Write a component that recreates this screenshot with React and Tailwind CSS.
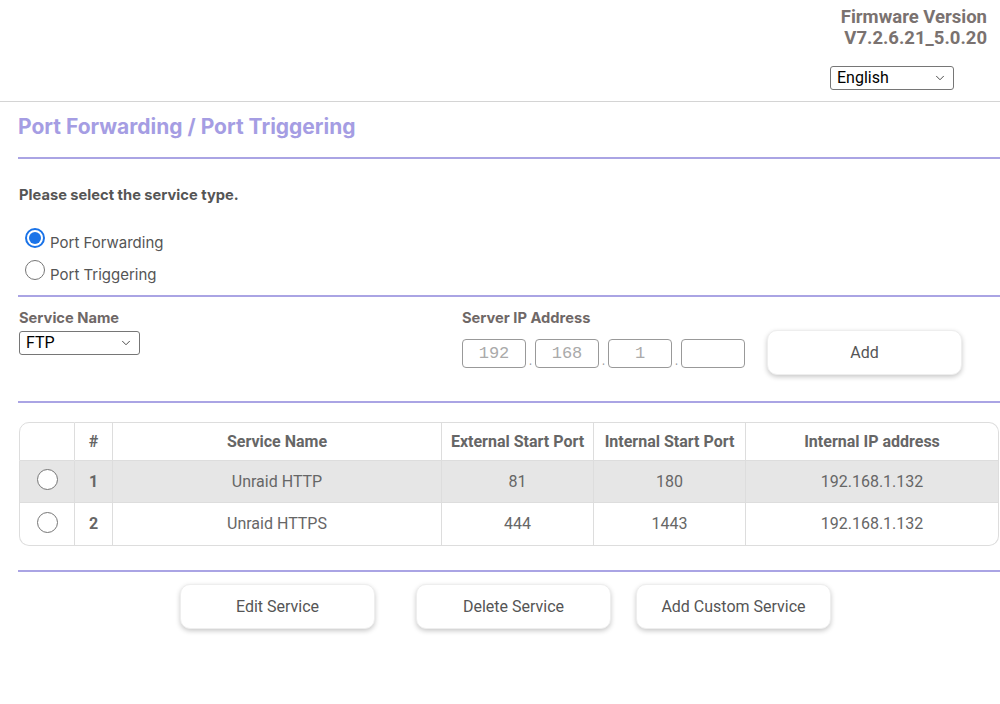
import { ChevronDown } from 'lucide-react'

const rows = [
  { id: 1, name: 'Unraid HTTP', ext: '81', int: '180', ip: '192.168.1.132' },
  { id: 2, name: 'Unraid HTTPS', ext: '444', int: '1443', ip: '192.168.1.132' },
]

function Select({ value, className }) {
  return (
    <div className={`flex items-center justify-between border border-[#767676] rounded-[3px] bg-white text-black px-1.5 ${className}`}>
      <span>{value}</span>
      <ChevronDown className="w-3.5 h-3.5 text-[#333]" strokeWidth={1.5} />
    </div>
  )
}

function Radio({ checked }) {
  return checked ? (
    <span className="w-5 h-5 shrink-0 rounded-full border-2 border-[#1a73e8] flex items-center justify-center bg-white">
      <span className="w-3 h-3 rounded-full bg-[#1a73e8]" />
    </span>
  ) : (
    <span className="w-5 h-5 shrink-0 rounded-full border border-[#767676] bg-white" />
  )
}

function Button({ children, className }) {
  return (
    <button className={`h-[45px] rounded-[10px] bg-white border border-[#eee] shadow-[0_2px_5px_rgba(0,0,0,0.22)] text-[16px] text-[#555] font-['Roboto',sans-serif] ${className}`}>
      {children}
    </button>
  )
}

export default function App() {
  return (
    <div className="w-[1000px] h-[704px] bg-white font-['Inter',sans-serif] text-[#555] overflow-hidden">
      {/* header */}
      <div className="h-[102px] border-b border-[#d4d4d4] flex flex-col items-end pr-[13px] pt-[7px]">
        <div className="text-right text-[18.5px] font-bold leading-[21px] text-[#7a7270] font-['Roboto',sans-serif]">
          <p>Firmware Version</p>
          <p>V7.2.6.21_5.0.20</p>
        </div>
        <Select value="English" className="mt-[17px] mr-[33px] w-[124px] h-[24px] text-[16px] font-['Roboto',sans-serif]" />
      </div>

      <div className="pl-[18px]">
        <h1 className="text-[21px] font-bold text-[#a59de3] pt-[12px] leading-[26px]">Port Forwarding / Port Triggering</h1>
        <div className="h-[2px] bg-[#aaa4e4] mt-[17px]" />

        <p className="mt-[25px] text-[14.7px] leading-[22px] font-bold text-[#555] pl-[1px]">Please select the service type.</p>
        <div className="mt-[22px] pl-[7px] flex flex-col gap-[12px] text-[15px] text-[#555]">
          <label className="flex items-start gap-[5px] h-[20px]">
            <Radio checked />
            <span className="mt-[5px] leading-[20px]">Port Forwarding</span>
          </label>
          <label className="flex items-start gap-[5px] h-[20px]">
            <Radio />
            <span className="mt-[5px] leading-[20px]">Port Triggering</span>
          </label>
        </div>
        <div className="h-[2px] bg-[#aaa4e4] mt-[15px]" />

        <div className="flex pl-[1px] pt-[11px] h-[104px]">
          <div className="w-[443px]">
            <p className="text-[14.7px] leading-[20px] font-bold text-[#6f6867]">Service Name</p>
            <Select value="FTP" className="mt-[3px] w-[121px] h-[24px] text-[16px] font-['Roboto',sans-serif]" />
          </div>
          <div>
            <p className="text-[14.7px] leading-[20px] font-bold text-[#6f6867]">Server IP Address</p>
            <div className="flex items-start">
              <div className="flex items-end mt-[11px] font-['Liberation_Mono',monospace] text-[17px] text-[#aaa]">
                {['192', '168', '1', ''].map((v, i) => (
                  <div key={i} className="flex items-end">
                    <div className="w-[64px] h-[29px] border border-[#999] rounded-[4px] flex items-center justify-center">{v}</div>
                    {i < 3 && <span className="w-[9px] text-center text-[10px] leading-[10px] text-[#999]">.</span>}
                  </div>
                ))}
              </div>
              <Button className="ml-[22px] mt-[2px] w-[195px]">Add</Button>
            </div>
          </div>
        </div>
        <div className="h-[2px] bg-[#aaa4e4]" />

        <div className="mt-[19px] mr-px pl-px font-['Roboto',sans-serif]">
          <table className="w-full border-separate border-spacing-0 text-[16px] text-center">
            <thead>
              <tr className="h-[39px] font-bold text-[#666]">
                <th className="w-[56px] border border-[#ddd] rounded-tl-[10px]"></th>
                <th className="w-[38px] border-y border-r border-[#ddd]">#</th>
                <th className="w-[329px] border-y border-r border-[#ddd]">Service Name</th>
                <th className="w-[152px] border-y border-r border-[#ddd]">External Start Port</th>
                <th className="w-[152px] border-y border-r border-[#ddd]">Internal Start Port</th>
                <th className="border-y border-r border-[#ddd] rounded-tr-[10px]">Internal IP address</th>
              </tr>
            </thead>
            <tbody className="text-[#666]">
              {rows.map((r, i) => {
                const last = i === rows.length - 1
                const bg = i === 0 ? 'bg-[#e6e6e6]' : 'bg-white'
                return (
                  <tr key={r.id} className={last ? 'h-[43px]' : 'h-[42px]'}>
                    <td className={`border-x border-b border-[#ddd] ${bg} ${last ? 'rounded-bl-[10px]' : ''}`}>
                      <span className="inline-block w-[21px] h-[21px] rounded-full border border-[#767676] bg-white align-middle -mt-[5px]" />
                    </td>
                    <td className={`border-r border-b border-[#ddd] font-bold ${bg}`}>{r.id}</td>
                    <td className={`border-r border-b border-[#ddd] ${bg}`}>{r.name}</td>
                    <td className={`border-r border-b border-[#ddd] ${bg}`}>{r.ext}</td>
                    <td className={`border-r border-b border-[#ddd] ${bg}`}>{r.int}</td>
                    <td className={`border-r border-b border-[#ddd] ${bg} ${last ? 'rounded-br-[10px]' : ''}`}>{r.ip}</td>
                  </tr>
                )
              })}
            </tbody>
          </table>
        </div>

        <div className="h-[2px] bg-[#aaa4e4] mt-[24px]" />
        <div className="flex pt-[12px] pl-[162px]">
          <Button className="w-[195px]">Edit Service</Button>
          <Button className="w-[195px] ml-[41px]">Delete Service</Button>
          <Button className="w-[195px] ml-[25px]">Add Custom Service</Button>
        </div>
      </div>
    </div>
  )
}
